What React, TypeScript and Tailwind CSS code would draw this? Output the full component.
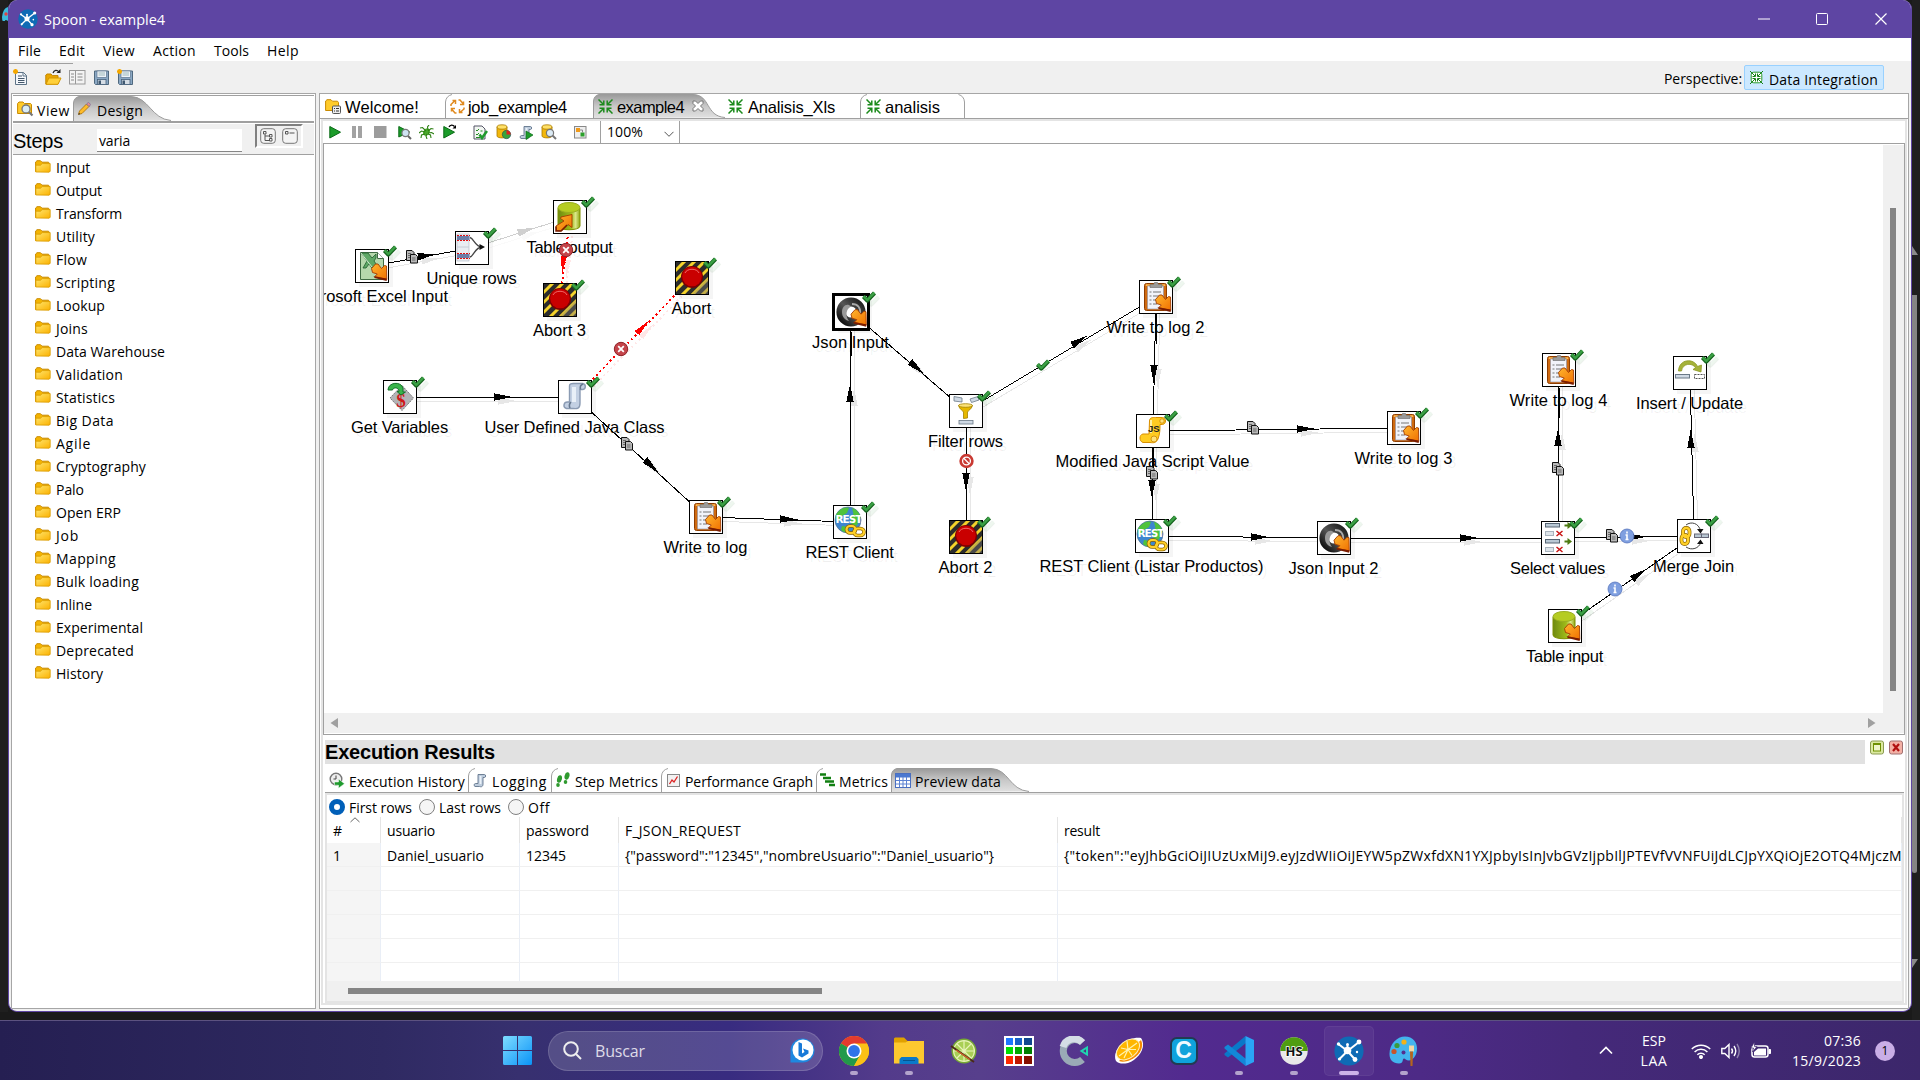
import React, { useLayoutEffect, useRef, useState } from "react";

/* Text that is tracked so that it fills exactly w pixels. */
function Fit({ w, children, className = "" }: { w: number; children: string; className?: string }) {
  const ref = useRef<HTMLSpanElement>(null);
  const [sp, setSp] = useState(0);
  useLayoutEffect(() => {
    if (ref.current) {
      const natural = ref.current.getBoundingClientRect().width;
      setSp((w - natural) / children.length);
    }
  }, []);
  return (
    <span className={"inline-block shrink-0 whitespace-pre " + className} style={{ width: w }}>
      <span ref={ref} style={{ letterSpacing: sp }}>{children}</span>
    </span>
  );
}

/* ---------- small icons ---------- */
type P = { className?: string };
const Folder = ({ className = "" }: P) => (
  <svg className={"shrink-0 " + className} width="16" height="13" viewBox="0 0 16 13">
    <defs>
      <linearGradient id="fold" x1="0" y1="0" x2="1" y2="1"><stop offset="0" stopColor="#ffe66e" /><stop offset="1" stopColor="#fbb100" /></linearGradient>
    </defs>
    <path d="M.6 11.5V2L2 .7h3.5L7 2.2h6.5l1 1.3v8z" fill="#f4b400" stroke="#c98a00" />
    <path d="M.8 12V5.2h4.7L7.2 3.6h8v7.6l-1 1z" fill="url(#fold)" stroke="#d89a00" strokeWidth=".8" />
  </svg>
);
const SpoonLogo = ({ s = 20 }: { s?: number }) => (
  <svg width={s} height={s} viewBox="0 0 30 30" className="shrink-0">
    <circle cx="15" cy="15" r="14.6" fill="#0f6bb5" />
    <g stroke="#fff" strokeWidth="2" strokeLinecap="round"><path d="M13.5 15L25 6M13.5 15L5 8.500M13.5 15L5.500 23M13.5 15L21 23.500M13.5 15l0-5" /></g>
    <circle cx="13.5" cy="14.5" r="3.800" fill="#fff" /><circle cx="25" cy="6" r="2.4" fill="#fff" /><circle cx="4.500" cy="8" r="1.7" fill="#fff" /><circle cx="5.500" cy="23" r="1.6" fill="#fff" /><circle cx="21" cy="23.500" r="2.4" fill="#fff" /><circle cx="13.5" cy="8.5" r="1.5" fill="#fff" /><circle cx="23" cy="16" r="1.2" fill="#fff" />
  </svg>
);
const Star = () => <path d="M2.5 0v5M0 2.5h5M.7.7l3.6 3.6M4.3.7L.7 4.3" stroke="#f5a800" strokeWidth="1.5" />;
const NewFile = () => (
  <svg width="16" height="17" viewBox="0 0 16 17" className="shrink-0">
    <path d="M2.5 3.5h8l3 3v9h-11z" fill="#f4f7fb" stroke="#5d7386" /><path d="M10 3.5v3.5h3.5" fill="none" stroke="#5d7386" />
    <path d="M5 7h4M5 9.5h6.5M5 11.5h6.5M5 13.5h6.5" stroke="#44576a" /><Star />
  </svg>
);
const OpenFile = () => (
  <svg width="17" height="17" viewBox="0 0 17 17" className="shrink-0">
    <path d="M.8 15V6l1.2-1h4l1.4 1.6H13V15z" fill="#e9a600" stroke="#c48600" /><path d="M1 15.3L3.8 9H16l-3 6.3z" fill="#ffd03a" stroke="#d49600" /><path d="M8 4c1-3 4-3.5 6-1" fill="none" stroke="#222" strokeWidth="1.200" /><path d="M11.500 4h4V0z" fill="#222" />
  </svg>
);
const Explorer = () => (
  <svg width="17" height="15" viewBox="0 0 17 15" className="shrink-0"><rect x=".5" y=".5" width="15.5" height="13.5" fill="#f3f3f3" stroke="#999" /><path d="M6.5 1v13" stroke="#999" /><path d="M2 4h3M2 7h3M2 10h3M8.500 4h5M8.500 7h5M8.500 10h5" stroke="#888" /></svg>
);
const Save = ({ star = false }: { star?: boolean }) => (
  <svg width="17" height="17" viewBox="0 0 17 17" className="shrink-0">
    <path d="M1.500 2h14v13.500h-13l-1-1z" fill="#8ba8c4" stroke="#50697f" /><rect x="4" y="2" width="9.500" height="6.500" fill="#eef3f8" stroke="#5b7690" strokeWidth=".7" /><path d="M5.500 4h6.500M5.500 6h6.500" stroke="#8aa" strokeWidth=".8" /><rect x="4.500" y="10.500" width="8.500" height="5" fill="#d5dde5" stroke="#45607a" strokeWidth=".8" /><rect x="5.500" y="11.500" width="2.500" height="3.500" fill="#3f5870" />
    {star && <Star />}
  </svg>
);
const ViewIcon = () => (
  <svg width="17" height="16" viewBox="0 0 17 16" className="shrink-0"><path d="M.6 12.500V2.500L2 1h4l1.500 1.500h6l1 1v9z" fill="#ffcb2b" stroke="#c98a00" /><circle cx="9" cy="8" r="4" fill="#d9ecf5" stroke="#777" strokeWidth="1.300" /><path d="M12 11l3.500 3.500" stroke="#777" strokeWidth="2.200" /></svg>
);
const Pencil = () => (
  <svg width="13" height="13" viewBox="0 0 13 13" className="shrink-0"><path d="M.5 12.500l1-3.500 7-7 2.500 2.500-7 7z" fill="#fdbb2a" stroke="#a86c00" strokeWidth=".8" /><path d="M8.500 2l2-1.700 2.200 2.200L11 4.500z" fill="#e98a8a" stroke="#7a6ea0" strokeWidth=".8" /><path d="M.3 12.700l.6-2 1.400 1.400z" fill="#333" /></svg>
);
const TreeBtn = ({ tree }: { tree?: boolean }) => (
  <svg width="16" height="16" viewBox="0 0 16 16" className="shrink-0"><rect x=".7" y=".7" width="14.600" height="14.600" rx="3" fill="#f4f4f4" stroke="#777" />
    {tree ? <path d="M3.500 3.500h2.500v2.500h-2.500zM5 6.500v6h4M5 8h4M9.500 6.500h2.500v2.500h-2.500zM9.500 10.500h2.500v2.500h-2.500z" fill="none" stroke="#555" /> : <path d="M3.500 3.500h2.500v2.500h-2.500zM7.500 5h5" fill="none" stroke="#555" />}
  </svg>
);
const WelcomeIcon = () => (
  <svg width="16" height="15" viewBox="0 0 16 15" className="shrink-0"><path d="M.6 11.500V2L2 .7h4l1.500 1.500h5l1 1.300v8z" fill="#ffcb2b" stroke="#c98a00" /><rect x="7.500" y="7" width="8" height="7.500" rx="1" fill="#eee" stroke="#555" /><path d="M9 9.500h1M11 9.500h3M9 12h1M11 12h3" stroke="#333" /></svg>
);
/* Four corner arrows: pointing out for jobs, in for transformations. */
const JobIcon = () => (
  <svg width="15" height="15" viewBox="0 0 15 15" className="shrink-0"><g fill="none" stroke="#e08a1e" strokeWidth="1.500"><path d="M1 7V5.500L4.500 2M2.500 1.500h3V5" /><path d="M8.500 1H10L13 4.500M13.500 2.500v3H10" /><path d="M14 8.500V10L10.500 13M12.500 13.500h-3V10" /><path d="M6.500 14H5L2 10.500M1.500 12.500v-3H5" /></g></svg>
);
const TransIcon = () => (
  <svg width="15" height="15" viewBox="0 0 15 15" className="shrink-0"><g fill="none" stroke="#1b8a1b" strokeWidth="1.500"><path d="M.5.500l5 5M5.800 1.500v4.300H1.500" /><path d="M14.500.500l-5 5M9.200 1.500v4.300h4.300" /><path d="M.5 14.500l5-5M5.800 13.500V9.200H1.500" /><path d="M14.500 14.500l-5-5M9.200 13.500V9.200h4.300" /></g></svg>
);
const PerspIcon = () => (
  <svg width="13" height="13" viewBox="0 0 13 13" className="shrink-0"><rect x="1.200" y="1.200" width="10.600" height="10.600" rx="2.500" fill="#fff" stroke="#2a9a2a" /><path d="M0 0l5 5M13 0L8 5M0 13l5-5M13 13L8 8M5.500 2.500v3H2.500M7.500 2.500v3h3M5.500 10.500v-3H2.500M7.500 10.500v-3h3" stroke="#178017" fill="none" /></svg>
);
const Run = ({ arrow = false }: { arrow?: boolean }) => (
  <svg width="14" height="15" viewBox="0 0 14 15" className="shrink-0"><path d="M.8 2.500L11.500 8.200.8 14z" fill="#1c9c2a" stroke="#0b6b17" />{arrow && <><path d="M6 3c1-2.500 4-2.500 5.500-.5" fill="none" stroke="#000" strokeWidth="1.300" /><path d="M9.500 4.500H13V1z" fill="#000" /></>}</svg>
);
const Pause = () => <svg width="11" height="12" className="shrink-0"><path d="M0 0h4v12H0zM6 0h4v12H6z" fill="#a2a2a2" /></svg>;
const Stop = () => <svg width="13" height="12" className="shrink-0"><rect width="12.500" height="12" fill="#9c9c9c" /></svg>;
const PreviewRun = () => (
  <svg width="14" height="15" viewBox="0 0 14 15" className="shrink-0"><path d="M.8 1.500L11.500 7 .8 12z" fill="#1c9c2a" stroke="#0b6b17" /><circle cx="7.500" cy="8" r="3.600" fill="#cfe3f2" stroke="#777" strokeWidth="1.200" /><path d="M10 11l3 3" stroke="#666" strokeWidth="2" /></svg>
);
const Bug = () => (
  <svg width="15" height="14" viewBox="0 0 15 14" className="shrink-0"><ellipse cx="7.500" cy="7" rx="3" ry="4" fill="#4aa82c" transform="rotate(35 7.500 7)" /><path d="M7 6L3.500 2.500 1 3M6 7L2.500 6 0 8M6 9l-3.500 1L2 13M8 9l-1 2 1 3M9 5L8.500 2 10 0M9 6l3-2.500L14.500 4M9 8l3.500-.5L15 9M9 9l2.500 1 .5 3" stroke="#2c7f12" fill="none" strokeWidth="1.100" /></svg>
);
const Verify = () => (
  <svg width="15" height="15" viewBox="0 0 15 15" className="shrink-0"><path d="M1 1h8l3 3v10H1z" fill="#f2f6f2" stroke="#556" /><path d="M3 5l1 1 2-2M3 9l1 1 2-2M7.500 6h2M3 12.500h4" stroke="#238a23" fill="none" /><path d="M6.500 9.500l2.500 3.500L14 6" fill="none" stroke="#1f9a2d" strokeWidth="2.600" /></svg>
);
const Cyl = ({ k }: { k: "pie" | "mag" }) => (
  <svg width="16" height="16" viewBox="0 0 16 16" className="shrink-0"><path d="M1 3v9c0 2.500 10 2.500 10 0V3" fill="#f2b70c" stroke="#a87800" strokeWidth=".8" /><ellipse cx="6" cy="3" rx="5" ry="2.200" fill="#ffe066" stroke="#a87800" strokeWidth=".8" />
    {k === "pie" ? <><circle cx="10.500" cy="10.500" r="4.200" fill="#37a43b" stroke="#245" strokeWidth=".6" /><path d="M10.500 10.500V6.300a4.200 4.200 0 0 1 4.200 4.200z" fill="#d22" /></> : <><circle cx="9" cy="9" r="3.600" fill="#dcebf5" stroke="#777" strokeWidth="1.200" /><path d="M11.500 11.500l3.500 3.500" stroke="#777" strokeWidth="2" /></>}
  </svg>
);
const Scroll = ({ run = false }: { run?: boolean }) => (
  <svg width="15" height="15" viewBox="0 0 15 15" className="shrink-0"><path d="M5 1.500h6.500c1.500 0 1.500 3 0 3H10v6.500c0 3-2 3-3.500 2.500H2c-1.500-.5-1-3 .5-3H5z" fill="#bccbdc" stroke="#62758c" strokeWidth=".9" /><path d="M7.500 3v8" stroke="#eaf1f8" strokeWidth="1.800" />{run && <path d="M7 6l7 4-7 4.500z" fill="#1c9c2a" stroke="#0b6b17" strokeWidth=".7" />}</svg>
);
const Results = () => <svg width="13" height="13" viewBox="0 0 13 13" className="shrink-0"><rect x=".5" y=".5" width="11.500" height="11.500" fill="#eee" stroke="#888" /><rect x="2" y="2" width="4" height="4" fill="#f09a1a" /><rect x="6.500" y="6.500" width="4" height="4" fill="#2aa02a" /><path d="M6 4h2.500v2.500" stroke="#888" fill="none" /></svg>;

/* ---------- step icons on a 32 x 32 grid ---------- */
const OrangeArrow = ({ t = "" }: { t?: string }) => (
  <g transform={t}>
    <path d="M15.500 18.500l4-4.500h2.500l3.500 4.500 3-3 2 .5.300 13.500-12-3 2.500-2.500-4.800-1.500z" fill="url(#oa)" stroke="#a33a00" strokeWidth=".9" />
    <path d="M17.500 26.300l1.200 1.700 12 3v-2.500z" fill="#7a1c00" />
  </g>
);
const Clip = () => (
  <>
    <rect x="4.500" y="2.500" width="22" height="27" rx="2" fill="#cf6a10" stroke="#8f3d00" /><path d="M6.500 5V4h18v1" stroke="#ffb84d" strokeWidth="1.500" fill="none" /><path d="M7.500 5h16v21l-3 2h-13z" fill="#f1f3fa" stroke="#8a8fa5" strokeWidth=".6" />
    <path d="M10 6.500V3.500h3.500l1-2h3l1 2H22v3z" fill="#9a9a9a" stroke="#666" strokeWidth=".6" />
    <path d="M9.500 11h2M13 11h8M9.500 15h2M13 15h8M9.500 19h2M13 19h5M9.500 23h2M13 23h4" stroke="#777" strokeWidth="1.200" /><OrangeArrow />
  </>
);
const Chain = () => (
  <g fill="none"><g stroke="#8a6200" strokeWidth="3.600"><rect x="12.500" y="20" width="9" height="7" rx="3.500" /><rect x="20" y="22.500" width="10" height="7" rx="3.500" /></g><g stroke="#ffd028" strokeWidth="2.200"><rect x="12.500" y="20" width="9" height="7" rx="3.500" /><rect x="20" y="22.500" width="10" height="7" rx="3.500" /></g></g>
);
const Glyph = ({ k }: { k: string }) => {
  switch (k) {
    case "excel": return <><path d="M4.500 2.500h17l6 6v21h-23z" fill="#b5d8ac" stroke="#3f6b43" /><path d="M21.500 2.500v6h6" fill="#fff" stroke="#3f6b43" /><path d="M5 3h7l4 5 4-4v4l-2 3 5 7h-7l-3-4-3 4H7l4-7z" fill="#5ea866" stroke="#1f5c2c" strokeWidth=".8" /><path d="M5 3l11 14" stroke="#cfe8cf" /><OrangeArrow /></>;
    case "unique": return <><rect x="1" y="2" width="12" height="27" fill="#e9edf2" stroke="#b5bcc8" strokeWidth=".7" /><path d="M1 15h12" stroke="#c8ccd6" /><rect x="1" y="4" width="12.500" height="4" fill="#6b7da8" /><rect x="1" y="22" width="12.500" height="4" fill="#6b7da8" /><path d="M1 3.500h13M1 8.500h13M1 21.500h13M1 26.500h13" stroke="#e01010" strokeDasharray="2 1" /><path d="M14 5.500c4 1 5 9.500 12 9.500M14 25c4-1 5-10 12-10" fill="none" stroke="#444" strokeWidth="1.300" /><path d="M23.500 12l5.500 3-5.500 3z" fill="#111" /></>;
    case "tout": case "tin": return <><path d="M4 7v18c0 5 22 5 22 0V7" fill="url(#cy)" stroke="#7e9000" /><ellipse cx="15" cy="6.500" rx="11" ry="5" fill="#b5cc22" stroke="#9aae20" />{k === "tin" ? <OrangeArrow /> : <><path d="M18 13.500L7 16l-.5 1.500 3.500 2.500-8 5 .500 4.500 5 .5 6.500-6.500 4 3z" fill="url(#oa)" stroke="#a33a00" strokeWidth=".9" /><path d="M2 25.500v4.500h5l6-6" fill="none" stroke="#7a1c00" strokeWidth="1.500" /></>}</>;
    case "abort": return <><rect width="32" height="32" fill="#2c2c2c" /><path d="M-2 10L10-2M-2 20L20-2M-2 30L30-2M5 34L34 5M15 34L34 15M25 34l9-9" stroke="#f5d32a" strokeWidth="3" /><path d="M14 34L34 14v20z" fill="#777" opacity=".4" /><circle cx="16" cy="15" r="11" fill="#7c0000" /><circle cx="16" cy="14.500" r="9.800" fill="#c90000" /><path d="M9 11c2-5 12-5 14 0" stroke="#f06a6a" fill="none" /></>;
    case "getvar": return <><path d="M18 4.500L29.500 17 18 29.500 6 17z" fill="#b3b3b6" stroke="#777" strokeDasharray="2 1" /><text x="17" y="25.500" textAnchor="middle" fontSize="19" fontWeight="700" fill="#d01818" fontFamily="Liberation Serif">$</text><path d="M4 9c0-8 13-9 15-2v4h2.500l-4.500 3-4-3.500 2-.2C15 6 9 6 8.500 9z" fill="#38b44a" stroke="#14702a" /></>;
    case "java": return <><path d="M10.500 5c0-2.500 2-2.500 4-2.500h9c4 .5 3.500 6 0 6h-2.500V22c0 6-3 6-7 5.500H7.500c-4-1-3-6.500 1-6.500h2z" fill="#c3d0e3" stroke="#8b9bb3" strokeWidth="1.400" /><path d="M15 6v15" stroke="#e9f0f8" strokeWidth="4" /><path d="M24 3c-3 1-3 3.500-2.500 5.500M12 21c-2 2-2 4-1 6" stroke="#66788f" strokeWidth="1.600" fill="none" /></>;
    case "json": return <><circle cx="16" cy="16" r="9.800" fill="none" stroke="url(#js)" strokeWidth="9.600" /><circle cx="16" cy="16" r="5.500" fill="#fff" /><path d="M16 10.500c-3.500-4-9-1-9 5.500 0 5 3 8 7 9-4-5-3-12 2-14.500z" fill="#999" /><path d="M17 8c6 0 9 4 8 10" stroke="#aaa" strokeWidth="1.800" fill="none" /><OrangeArrow t="translate(.5 -.3)" /></>;
    case "filter": return <><g fill="#cfd9e4" stroke="#6a7886" strokeWidth=".8"><path d="M4 1.500l8 1.500v4l-8-1z" /><path d="M20 4l8-2.500 1 3.500-7.500 2.500z" /><rect x="9" y="25.500" width="14" height="3.500" /></g><path d="M8.500 10.500c1 4 4.500 5 5 6.500v6.500l4-.5v-6c.5-1.500 4-2.500 5-6.500z" fill="#e6b800" stroke="#a38200" strokeWidth=".8" /><ellipse cx="15.500" cy="10.500" rx="7" ry="1.800" fill="#fbe27a" stroke="#a38200" strokeWidth=".8" /></>;
    case "rest": return <><circle cx="14" cy="14" r="13" fill="#3e86cf" stroke="#4a6a8a" strokeWidth=".7" /><path d="M5 5c4-4 9-4 10-3l-2 5-5 3-2 5-4-1c-1-4 0-6 3-9zM18 2c5 1 8 6 8.500 10l-4 8-5-2-1-6 3-4zM8 20l6 1 1 5c-3 1-6 0-8-2z" fill="#4fc33c" /><text x="1.500" y="16.500" fontSize="10.500" fontWeight="700" textLength="27" fill="#fff" fontFamily="DejaVu Sans">REST</text><Chain /></>;
    case "clip": return <Clip />;
    case "js": return <><path d="M12.500 6c0-4 4-3.500 6-3.500h7c4 .5 4 6.500 0 7h-2.500c0 5 0 9-2 14.500-2 4-4 4-8 3.500H6c-4-1-4-8 0-8.500h6z" fill="#ffcc22" stroke="#d98f00" /><path d="M14 5v13" stroke="#fff0a0" strokeWidth="2" /><circle cx="25" cy="6" r="2.200" fill="#ffe27a" stroke="#c98400" strokeWidth=".8" /><circle cx="17" cy="24" r="3" fill="#ffe27a" stroke="#c98400" strokeWidth=".8" /><text x="11" y="17" fontSize="9.500" fontWeight="700" fill="#222" fontFamily="Liberation Sans">JS</text></>;
    case "insert": return <><path d="M4.500 14C5 1.500 20 1 23.500 9.500l4-1.500-.5 7-8-2.500 2.500-1.700C18.500 5.500 8.500 6 7.500 14z" fill="#a5b23a" stroke="#8c971f" strokeWidth=".8" /><rect x="1.500" y="17.500" width="14" height="3.500" fill="#cfd9e4" stroke="#6a7886" /><rect x="20.500" y="17.500" width="10" height="4" fill="none" stroke="#555" strokeDasharray="2 1" /></>;
    case "select": return <>{[1.5, 17.5].map((y) => <g key={y}><rect x="3.500" y={y} width="14" height="3.500" fill="#b9c8d4" stroke="#566573" /><rect x="3.500" y={y + 8} width="8" height="4" fill="#dfe5ea" stroke="#a9b4be" /><path d={`M14.500 ${y + 7.500}l6 5M20.500 ${y + 7.500}l-6 5`} stroke="#c81414" strokeWidth="1.500" /><path d={`M22.500 ${y + 2}h4`} stroke="#4d7a12" strokeWidth="2" /><path d={`M25.500 ${y - 1.500}l4.500 3.500-4.500 3.500z`} fill="#4d7a12" /></g>)}</>;
    case "merge": return <><path d="M8 5c5-4 13-2 14.500 6M8 27c6 4 13 1 14.500-4" fill="none" stroke="#444" /><path d="M19 9h6.500L22.500 13.500zM19 24h6.500l-3-4.500z" fill="#111" /><g fill="none"><g stroke="#8a6200" strokeWidth="3.800"><rect x="5" y="8" width="6.500" height="9" rx="3.200" /><rect x="3.500" y="15" width="6.500" height="9" rx="3.200" /></g><g stroke="#ffd028" strokeWidth="2.400"><rect x="5" y="8" width="6.500" height="9" rx="3.200" /><rect x="3.500" y="15" width="6.500" height="9" rx="3.200" /></g></g><rect x="16.500" y="14" width="7" height="3.500" fill="#b9c8d4" stroke="#667" /><rect x="23.500" y="14" width="7" height="3.500" fill="#b9c8d4" stroke="#667" /></>;
  }
  return null;
};
const Tick = () => <g strokeLinejoin="round"><path d="M1.500 6.500l3.800 4L12.500 3" fill="none" stroke="#17651f" strokeWidth="4.200" /><path d="M1.500 6.200l3.800 3.800L12.500 2.600" fill="none" stroke="#3aa044" strokeWidth="2.400" /></g>;

/* name, box left, box top, label width, icon */
const steps: [string, number, number, number, string][] = [
  ["Microsoft Excel Input", 355, 249, 153, "excel"], ["Unique rows", 455, 231, 90, "unique"], ["Table output", 553, 200, 86, "tout"],
  ["Abort 3", 543, 283, 53, "abort"], ["Abort", 675, 261, 40, "abort"], ["Get Variables", 383, 380, 97, "getvar"],
  ["User Defined Java Class", 558, 380, 180, "java"], ["Json Input", 834, 295, 77, "json"], ["Filter rows", 949, 394, 75, "filter"],
  ["Abort 2", 949, 520, 54, "abort"], ["Write to log", 689, 500, 84, "clip"], ["REST Client", 833, 505, 88, "rest"],
  ["Write to log 2", 1139, 280, 98, "clip"], ["Modified Java Script Value", 1136, 414, 194, "js"], ["REST Client (Listar Productos)", 1135, 519, 224, "rest"],
  ["Json Input 2", 1317, 521, 90, "json"], ["Write to log 3", 1387, 411, 98, "clip"], ["Write to log 4", 1542, 353, 98, "clip"],
  ["Insert / Update", 1673, 356, 107, "insert"], ["Select values", 1541, 521, 95, "select"], ["Merge Join", 1677, 519, 81, "merge"], ["Table input", 1548, 609, 77, "tin"],
];
/* x1, y1, x2, y2, arrow base x, arrow base y, colour, dotted */
type Hop = [number, number, number, number, number, number, string, boolean];
const hops: Hop[] = [
  [372, 266, 472, 248, 418, 257, "#000", false], [472, 248, 570, 217, 518, 233, "#cfcfcf", false], [570, 217, 560, 300, 564, 256, "#f00", true],
  [575, 397, 692, 278, 637, 333, "#f00", true], [400, 397, 575, 397, 494, 397, "#000", false], [575, 397, 706, 517, 645, 460, "#000", false],
  [706, 517, 850, 522, 780, 519, "#000", false], [850, 522, 851, 312, 850, 402, "#000", false], [851, 312, 966, 411, 910, 362, "#000", false],
  [966, 411, 966, 537, 966, 473, "#000", false], [966, 411, 1156, 297, 1072, 345, "#000", false], [1156, 297, 1153, 431, 1154, 365, "#000", false],
  [1153, 431, 1404, 428, 1297, 429, "#000", false], [1153, 431, 1152, 536, 1152, 480, "#000", false], [1152, 536, 1334, 538, 1251, 537, "#000", false],
  [1334, 538, 1558, 538, 1460, 538, "#000", false], [1558, 538, 1559, 370, 1558, 446, "#000", false], [1558, 538, 1694, 536, 1628, 537, "#000", false],
  [1694, 536, 1690, 373, 1691, 448, "#000", false], [1565, 626, 1694, 536, 1632, 579, "#000", false],
];
function HopLines({ ghost }: { ghost?: boolean }) {
  return (
    <g transform={ghost ? "translate(4 4)" : undefined} opacity={ghost ? 0.09 : 1} shapeRendering="crispEdges">
      {hops.map(([x1, y1, x2, y2, ax, ay, c, dot], i) => {
        const d = Math.hypot(x2 - x1, y2 - y1), ux = (x2 - x1) / d, uy = (y2 - y1) / d;
        const hw = dot ? 3 : 3.7;
        const pts = [[ax - uy * hw, ay + ux * hw], [ax + uy * hw, ay - ux * hw], [ax + ux * 18, ay + uy * 18]].map((p) => p.join(",")).join(" ");
        return <g key={i}><line x1={x1} y1={y1} x2={x2} y2={y2} stroke={c} strokeWidth={dot ? 2 : 1} strokeDasharray={dot ? "2 3" : undefined} /><polygon points={pts} fill={c} /></g>;
      })}
    </g>
  );
}
const Copy = ({ x, y }: { x: number; y: number }) => <g transform={`translate(${x - 6} ${y - 7})`} fill="#b9b9b9" stroke="#111"><path d="M.5.500h5.500l2 2v8H.5z" /><path d="M4.500 4.500h5l2 2v6.500h-7z" /><path d="M2 3.500h3M2 5.500h2M2 7.500h2M6 8h3.500M6 10h3.500" stroke="#555" strokeWidth=".8" /></g>;
const Info = ({ x, y }: { x: number; y: number }) => <g><circle cx={x} cy={y} r="7" fill="#7f9fe0" stroke="#5674bd" strokeWidth=".8" /><path d={`M${x} ${y - 4.500}v2M${x - 1.500} ${y - 1}h1.500v4.500m-1.500 0h3`} stroke="#fff" strokeWidth="1.600" fill="none" /></g>;
const ErrorDot = ({ x, y }: { x: number; y: number }) => <g><circle cx={x} cy={y} r="6.700" fill="#c4444a" stroke="#8f2328" /><path d={`M${x - 2.800} ${y - 2.800}l5.600 5.600M${x + 2.800} ${y - 2.800}l-5.600 5.600`} stroke="#fff" strokeWidth="1.800" /></g>;

function Canvas() {
  return (
    <div className="relative h-[569px] w-[1559px] shrink-0 overflow-hidden bg-white">
      <div className="absolute left-[-324px] top-[-144px] h-[800px] w-[1920px] font-['Liberation_Sans',sans-serif] text-[16.5px] leading-[20px] text-black">
        <svg className="absolute left-0 top-0" width="1920" height="800">
          <defs>
            <linearGradient id="oa" x1="0" y1="0" x2="1" y2="1"><stop offset="0" stopColor="#ffb52e" /><stop offset="1" stopColor="#f07000" /></linearGradient>
            <linearGradient id="cy"><stop offset="0" stopColor="#6f8a10" /><stop offset=".6" stopColor="#9fbb1a" /><stop offset=".8" stopColor="#dbe98a" /><stop offset="1" stopColor="#8ea512" /></linearGradient>
            <linearGradient id="js" x1="0" y1="1" x2="1" y2="0"><stop offset="0" stopColor="#111" /><stop offset=".5" stopColor="#555" /><stop offset="1" stopColor="#222" /></linearGradient>
          </defs>
          <HopLines ghost /><HopLines />
        </svg>
        {steps.map(([n, x, y, w, k]) => {
          const sel = n === "Json Input";
          return (
            <div key={n} className="absolute size-[34px]" style={{ left: x, top: y }}>
              <div className={"size-[34px] border border-black bg-white shadow-[4px_4px_0_rgba(0,0,0,0.04)] " + (sel ? "outline-2 outline-black" : "")}>
                <svg width="32" height="32" viewBox="0 0 32 32" className="block"><Glyph k={k} /></svg>
              </div>
              <svg className="absolute -top-[5px] left-[28px] overflow-visible" width="16" height="14"><g transform="translate(4 4)" opacity=".08"><Tick /></g><Tick /></svg>
              <div className="absolute left-[16.5px] top-[37px] -translate-x-1/2 text-center [text-shadow:4px_4px_0_rgba(0,0,0,0.06)]"><Fit w={w}>{n}</Fit></div>
            </div>
          );
        })}
        <svg className="absolute left-0 top-0" width="1920" height="800">
          <Copy x={412} y={257} /><Copy x={627} y={444} /><Copy x={1253} y={428} /><Copy x={1152} y={473} /><Copy x={1558} y={469} /><Copy x={1612} y={536} />
          <Info x={1627} y={536} /><Info x={1615} y={589} /><ErrorDot x={566} y={250} /><ErrorDot x={621} y={349} />
          <circle cx="966.500" cy="461" r="7.200" fill="#c93a33" /><circle cx="966.500" cy="461" r="3.900" fill="none" stroke="#fff" strokeWidth="1.300" /><path d="M963.800 458.300l5.400 5.400" stroke="#fff" strokeWidth="1.300" />
          <g transform="translate(1036 358)"><Tick /></g>
          <g stroke="#000" shapeRendering="crispEdges"><path d="M1156.500 314v30M851.500 332v24M966.500 428v26M1153.500 448v20M1559.500 388v30M1690.500 391v24" /></g>
        </svg>
      </div>
    </div>
  );
}

/* Curved selected tab of the classic tab folder */
const TabShape = ({ w, h, flat }: { w: number; h: number; flat: number }) => (
  <svg className="absolute left-0 top-0 z-0" width={w} height={h + 1}>
    <defs><linearGradient id={"tab" + w} x1="0" y1="0" x2="0" y2="1"><stop offset="0" stopColor="#9a9a9a" /><stop offset=".5" stopColor="#c8c8c8" /><stop offset="1" stopColor="#e1e1e1" /></linearGradient></defs>
    <path d={`M.5 ${h + 1}V7Q1 1.500 6 .5H${flat}C${flat + 18} 1 ${w - 20} ${h - 1} ${w} ${h + 0.5}z`} fill={`url(#tab${w})`} />
    <path d={`M.5 ${h + 1}V7Q1 1.500 6 .5H${flat}C${flat + 18} 1 ${w - 20} ${h - 1} ${w} ${h + 0.5}`} fill="none" stroke="#9b9b9b" />
  </svg>
);
const TabEdge = () => <svg width="8" height="24" className="shrink-0"><path d="M.5 24V8Q1 2 7 .5" fill="none" stroke="#a0a0a0" /></svg>;
const TabEnd = () => <svg width="9" height="24" className="shrink-0"><path d="M.5.500Q6 2 6.500 8V24" fill="none" stroke="#a0a0a0" /></svg>;

const categories: [string, number][] = [["Input", 34], ["Output", 46], ["Transform", 66], ["Utility", 39], ["Flow", 31], ["Scripting", 59], ["Lookup", 49], ["Joins", 32], ["Data Warehouse", 109], ["Validation", 67], ["Statistics", 59], ["Big Data", 58], ["Agile", 35], ["Cryptography", 90], ["Palo", 28], ["Open ERP", 65], ["Job", 23], ["Mapping", 60], ["Bulk loading", 83], ["Inline", 36], ["Experimental", 87], ["Deprecated", 78], ["History", 47]];

function LeftPanel() {
  return (
    <div className="flex h-[916px] w-[305px] shrink-0 flex-col border border-[#a6a6a6] bg-white px-px pt-px">
      <div className="flex h-[28px] shrink-0 items-center border-b-2 border-t border-[#a0a0a0] pl-[4px]">
        <ViewIcon /><Fit w={33} className="ml-[3px] mt-[4px]">View</Fit>
        <div className="relative ml-[3px] h-[25px] w-[98px]">
          <TabShape w={98} h={24} flat={58} />
          <div className="relative flex h-[25px] items-center pl-[5px]"><Pencil /><Fit w={46} className="ml-[6px] mt-[4px]">Design</Fit></div>
        </div>
      </div>
      <div className="mt-px flex h-[31px] shrink-0 items-start border-b border-[#a0a0a0] bg-[#f0f0f0]">
        <Fit w={50} className="mt-[5px] font-['Liberation_Sans',sans-serif] text-[20px] leading-[24px]">Steps</Fit>
        <div className="ml-[34px] mt-[5px] flex h-[23px] w-[145px] items-center border-b border-[#868686] bg-white pl-[2px] pt-[2px]"><Fit w={31}>varia</Fit></div>
        <div className="ml-[13px] flex h-[24px] w-[48px] items-center gap-[6px] border-2 border-b-[#fff] border-l-[#808080] border-r-[#fff] border-t-[#808080] pl-[3px]"><TreeBtn tree /><TreeBtn /></div>
      </div>
      <div className="flex flex-col">
        {categories.map(([c, w]) => (
          <div key={c} className="flex h-[23px] items-center pl-[22px]"><Folder /><Fit w={w} className="ml-[5px] mt-[2px] leading-[20px]">{c}</Fit></div>
        ))}
      </div>
    </div>
  );
}

const EditorTabs = () => (
  <div className="flex h-[25px] shrink-0 items-center border-b border-[#a0a0a0] pl-[5px] font-['Liberation_Sans',sans-serif] text-[16.500px]">
    <WelcomeIcon /><Fit w={74} className="ml-[4px] mt-[2px]">Welcome!</Fit>
    <div className="ml-[26px] flex items-center"><TabEdge /></div>
    <div className="-ml-[3px] flex items-center"><JobIcon /><Fit w={99} className="ml-[3px] mt-[2px]">job_example4</Fit></div>
    <div className="relative ml-[26px] h-[24px] w-[132px]">
      <TabShape w={132} h={23} flat={100} />
      <div className="relative flex h-[24px] items-center pl-[5px]"><TransIcon /><Fit w={67} className="ml-[4px] mt-[2px]">example4</Fit>
        <svg width="12" height="12" viewBox="0 0 12 12" className="ml-[8px]"><path d="M1 1h2.500L6 3.500 8.500 1H11v2.500L8.500 6 11 8.500V11H8.500L6 8.500 3.500 11H1V8.500L3.500 6 1 3.500z" fill="#fff" stroke="#777" /></svg></div>
    </div>
    <div className="ml-[3px] flex items-center"><TransIcon /><Fit w={87} className="ml-[5px] mt-[2px]">Analisis_Xls</Fit></div>
    <div className="ml-[25px] flex items-center"><TabEdge /></div>
    <div className="-ml-[2px] flex items-center"><TransIcon /><Fit w={55} className="ml-[4px] mt-[2px]">analisis</Fit></div>
    <div className="ml-[18px] flex"><TabEnd /></div>
  </div>
);

const EditorToolbar = () => (
  <div className="flex h-[22px] shrink-0 items-center bg-white pl-[6px]">
    <div className="flex items-center"><div className="mb-[2px]"><Run /></div><div className="ml-[9px]"><Pause /></div><div className="ml-[11px]"><Stop /></div><div className="ml-[11px]"><PreviewRun /></div><div className="ml-[7px]"><Bug /></div><div className="mb-[2px] ml-[9px]"><Run arrow /></div>
      <div className="ml-[16px]"><Verify /></div><div className="ml-[8px]"><Cyl k="pie" /></div><div className="ml-[7px]"><Scroll run /></div><div className="ml-[7px]"><Cyl k="mag" /></div><div className="ml-[17px]"><Results /></div></div>
    <div className="ml-[13px] flex h-[22px] w-[80px] items-center border-x border-[#a0a0a0] pl-[6px]"><Fit w={36}>100%</Fit><svg width="10" height="7" className="ml-[21px] mt-1"><path d="M.5.800L5 5.300 9.500.8" fill="none" stroke="#555" /></svg></div>
  </div>
);

const ResultTabs = () => (
  <div className="flex h-[25px] shrink-0 items-center border-b border-[#a0a0a0] pl-[4px]">
    <svg width="16" height="17" viewBox="0 0 16 17" className="shrink-0"><circle cx="7" cy="7" r="5.800" fill="#eee" stroke="#777" strokeWidth="1.400" /><path d="M7 3.500V7H4.500" stroke="#444" fill="none" /><path d="M5.500 10h4V7l6 4.700-6 4.500v-3h-4z" fill="#1f9a2d" stroke="#fff" strokeWidth=".5" /></svg>
    <Fit w={116} className="ml-[4px] mt-[3px]">Execution History</Fit><div className="ml-[3px]"><TabEdge /></div>
    <div className="-ml-[3px]"><Scroll /></div><Fit w={55} className="ml-[4px] mt-[3px]">Logging</Fit><div className="ml-[4px]"><TabEdge /></div>
    <svg width="16" height="16" viewBox="0 0 16 16" className="-ml-[4px] shrink-0" fill="#2f9a2f"><ellipse cx="4.500" cy="7" rx="2.400" ry="3.800" transform="rotate(15 4.500 7)" /><ellipse cx="3" cy="13" rx="1.800" ry="2" /><ellipse cx="12" cy="4" rx="2.400" ry="3.800" transform="rotate(15 12 4)" /><ellipse cx="10.500" cy="10" rx="1.800" ry="2" /></svg>
    <Fit w={83} className="ml-[4px] mt-[3px]">Step Metrics</Fit><div className="ml-[3px]"><TabEdge /></div>
    <svg width="13" height="13" viewBox="0 0 13 13" className="-ml-[2px] shrink-0"><rect x=".5" y=".5" width="12" height="12" fill="#f2f2f2" stroke="#888" /><path d="M2.500 10l2.500-4 2 2 3.500-5.500" fill="none" stroke="#d22" strokeWidth="1.300" /></svg>
    <Fit w={128} className="ml-[5px] mt-[3px]">Performance Graph</Fit><div className="ml-[3px]"><TabEdge /></div>
    <svg width="16" height="14" viewBox="0 0 16 14" className="-ml-[4px] shrink-0"><path d="M0 1.500h6M3 5h8M5 8.500h9M9 12h6" stroke="#128012" strokeWidth="2.500" /></svg>
    <Fit w={49} className="ml-[3px] mt-[3px]">Metrics</Fit>
    <div className="relative ml-[3px] h-[24px] w-[138px]"><TabShape w={138} h={23} flat={100} />
      <div className="relative flex h-[24px] items-center pl-[4px]"><svg width="16" height="15" viewBox="0 0 16 15"><rect x=".5" y=".5" width="15" height="14" fill="#fff" stroke="#4a6fc0" /><rect x="1" y="1" width="14" height="3.500" fill="#4a78d0" /><path d="M1 7.500h14M1 11h14M4.500 4v10M8 4v10M11.500 4v10" stroke="#5c82d2" /></svg><Fit w={86} className="ml-[4px] mt-[3px]">Preview data</Fit></div></div>
  </div>
);
const Radio = ({ on }: { on?: boolean }) => on
  ? <div className="size-[16px] shrink-0 rounded-full border-[5px] border-[#005fb8] bg-white" />
  : <div className="size-[16px] shrink-0 rounded-full border border-[#808080] bg-[#f5f5f5]" />;

const cols = "grid grid-cols-[54px_139px_99px_439px_844px]";
const token = '{"token":"eyJhbGciOiJIUzUxMiJ9.eyJzdWIiOiJEYW5pZWxfdXN1YXJpbyIsInJvbGVzIjpbIlJPTEVfVVNFUiJdLCJpYXQiOjE2OTQ4MjczM';
function ExecutionResults() {
  return (
    <div className="ml-[2px] flex w-[1579px] flex-col">
      <div className="mt-[5px] flex h-[24px] items-start">
        <div className="flex h-[24px] w-[1540px] shrink-0 items-center bg-[#e1e1e1] font-['Liberation_Sans',sans-serif] text-[20px] font-bold"><Fit w={170}>Execution Results</Fit></div>
        <svg width="35" height="16" className="ml-[4px] shrink-0"><rect x="1.500" y="1" width="13" height="13" rx="2" fill="#dbe9a0" stroke="#8a9a50" /><rect x="4.500" y="4.500" width="7" height="6.500" fill="#eef5c8" stroke="#6f9000" /><path d="M4 4h8" stroke="#6f9000" strokeWidth="2" /><rect x="20.500" y="1" width="13" height="13" rx="2" fill="#f3b0a5" stroke="#a07070" /><path d="M24 4l6 7M30 4l-6 7" stroke="#b01010" strokeWidth="2.200" /></svg>
      </div>
      <div className="mt-[4px]"><ResultTabs /></div>
      <div className="h-[210px] border-2 border-[#e4e4e4] bg-white">
        <div className="flex h-[22px] items-center pl-[2px] pt-[2px]"><Radio on /><Fit w={63} className="ml-[4px] mt-[2px]">First rows</Fit><div className="ml-[7px]"><Radio /></div><Fit w={62} className="ml-[4px] mt-[2px]">Last rows</Fit><div className="ml-[7px]"><Radio /></div><Fit w={22} className="ml-[4px] mt-[2px]">Off</Fit></div>
        <div className={cols + " h-[26px] [&>div]:flex [&>div]:items-center [&>div]:border-r [&>div]:border-[#e5e5e5] [&>div]:pl-[6px] [&>div]:pt-[2px]"}>
          <div className="relative"><Fit w={8}>#</Fit><svg width="10" height="6" className="absolute left-[23px] top-0"><path d="M.5 5L5 .8 9.500 5" fill="none" stroke="#666" /></svg></div>
          <div><Fit w={48}>usuario</Fit></div>
          <div><Fit w={63}>password</Fit></div>
          <div><Fit w={116}>F_JSON_REQUEST</Fit></div>
          <div><Fit w={36}>result</Fit></div>
        </div>
        <div className="h-[138px] overflow-hidden">
          {[0, 1, 2, 3, 4, 5].map((r) => (
            <div key={r} className={cols + " h-[24px] [&>div]:flex [&>div]:items-center [&>div]:overflow-hidden [&>div]:border-b [&>div]:border-r [&>div]:border-b-[#f0f0f0] [&>div]:border-r-[#e9eef6] [&>div]:pl-[6px] [&>div]:pt-[2px]"}>
              <div className="bg-[#f5f5f5]">{r === 0 && <Fit w={8}>1</Fit>}</div>
              <div>{r === 0 && <Fit w={97}>Daniel_usuario</Fit>}</div>
              <div>{r === 0 && <Fit w={40}>12345</Fit>}</div>
              <div>{r === 0 && <Fit w={369}>{'{"password":"12345","nombreUsuario":"Daniel_usuario"}'}</Fit>}</div>
              <div>{r === 0 && <Fit w={838}>{token}</Fit>}</div>
            </div>
          ))}
        </div>
        <div className="flex h-[20px] items-center bg-[#f0f0f0] pl-[21px]"><div className="h-[6px] w-[474px] bg-[#858585]" /></div>
      </div>
    </div>
  );
}

function RightPanel() {
  return (
    <div className="flex h-[916px] w-[1590px] shrink-0 flex-col border border-[#a6a6a6] bg-white">
      <EditorTabs />
      <div className="mx-px flex h-[886px] flex-col border-2 border-[#e4e4e4]">
        <EditorToolbar />
        <div className="flex h-[592px] w-[1582px] shrink-0 flex-col border border-[#a0a0a0]">
          <div className="flex">
            <Canvas />
            <div className="mt-px w-[21px] bg-[#f0f0f0]"><div className="ml-[7px] mt-[63px] h-[483px] w-[6px] bg-[#858585]" /></div>
          </div>
          <div className="flex h-[20px] items-center justify-between bg-[#f0f0f0] pl-[6px] pr-[28px]">
            <svg width="8" height="10"><path d="M8 0v10L.5 5z" fill="#a0a0a0" /></svg><svg width="8" height="10"><path d="M0 0v10L7.500 5z" fill="#a0a0a0" /></svg>
          </div>
        </div>
        <ExecutionResults />
      </div>
    </div>
  );
}

/* ---------- taskbar ---------- */
const apps: { n: string; run?: boolean; active?: boolean; icon: React.ReactNode }[] = [
  { n: "chrome", run: true, icon: <svg width="30" height="30" viewBox="0 0 30 30"><circle cx="15" cy="15" r="15" fill="#fbc116" /><path d="M15 15L2 7.500A15 15 0 0 1 28 7.500z" fill="#e33b2e" /><path d="M2 7.500A15 15 0 0 0 15 30l6.500-11.500L15 15z" fill="#219a4a" /><path d="M15 7.500h13A15 15 0 0 1 15 30l6.500-11.500z" fill="#fbc116" /><circle cx="15" cy="15" r="7.500" fill="#fff" /><circle cx="15" cy="15" r="5.900" fill="#2f74e8" /></svg> },
  { n: "files", run: true, icon: <svg width="30" height="28" viewBox="0 0 30 28"><path d="M0 5V1.500L1 .5h9L13.500 4H28l2 1.500V10H0z" fill="#e0a100" /><path d="M0 5.500h11.500L14 4h16v22.500H0z" fill="#fdc82f" /><path d="M5.500 27v-5l2-2h15l2 2v5z" fill="#0b79c9" /><path d="M9 23.500h12" stroke="#07538f" /></svg> },
  { n: "lime", icon: <svg width="28" height="28" viewBox="0 0 28 28"><circle cx="14" cy="14" r="12.500" fill="#76a834" /><circle cx="14" cy="14" r="11" fill="#e8f3b8" /><circle cx="14" cy="14" r="9.800" fill="#a9cf55" /><path d="M14 4v20M4 14h20M7 7l14 14M21 7L7 21" stroke="#e8f3b8" strokeWidth="1.200" /><path d="M1 9l23 16" stroke="#4a2a16" strokeWidth="2" /><path d="M6 13l14 9.500" stroke="#d2622a" strokeWidth="1.300" /></svg> },
  { n: "grid", icon: <div className="grid size-[30px] grid-cols-3 gap-[2px] bg-white p-[2px]"><i className="bg-[#1d78ff]" /><i className="bg-[#1560c8]" /><i className="bg-[#10478f]" /><i className="bg-[#00e000]" /><i className="bg-[#00aa00]" /><i className="bg-[#008000]" /><i className="bg-[#ff2a00]" /><i className="bg-[#c01800]" /><i className="bg-[#861000]" /></div> },
  { n: "camtasia", icon: <svg width="30" height="30" viewBox="0 0 30 30"><path d="M23.500 6.500a11.500 11.500 0 1 0 0 17" fill="none" stroke="#9aaab6" strokeWidth="7" /><path d="M23.500 6.500A11.500 11.500 0 0 0 4 11" fill="none" stroke="#d4dde6" strokeWidth="7" /><path d="M28 11.500v7L22.500 15z" fill="#4d3480" stroke="#1fd6b0" strokeWidth="2" /></svg> },
  { n: "orange", icon: <svg width="30" height="30" viewBox="0 0 30 30"><path d="M2 25C-3 14 13 0 27 2c6 9-2 21-13 25-5 1-9 1-12-2z" fill="#fff" /><path d="M27 4c4 8-3 18-13 21-4 1-7 1-9 0z" fill="#f58a00" /><ellipse cx="14" cy="13.500" rx="13" ry="8.500" fill="#ffb600" stroke="#fff1c0" transform="rotate(-38 14 13.500)" /><path d="M5 20L23 7M14 13.500L13 5M14 13.500l4 6M14 13.500L7 12M14 13.500h8M14 13.500L10 22" stroke="#fff3b0" strokeWidth="1.200" /></svg> },
  { n: "c", icon: <div className="flex size-[28px] items-center justify-center rounded-[7px] border-2 border-[#223b52] bg-[#0fa3dc] font-['Liberation_Sans',sans-serif] text-[23px] font-bold leading-none text-[#eefaff]">C</div> },
  { n: "code", run: true, icon: <svg width="30" height="30" viewBox="0 0 30 30"><path d="M22 7L4 21.500.5 19V17.500L21.500 0z" fill="#0a78c8" /><path d="M22 23L4 8.500.5 11v1.500L21.500 30z" fill="#1287d8" /><path d="M21.500 0L30 4v22l-8.500 4z" fill="#2aa5f4" /></svg> },
  { n: "hs", run: true, icon: <svg width="28" height="28" viewBox="0 0 28 28"><circle cx="14" cy="14" r="13.700" fill="#e8e8e8" /><path d="M.3 14a13.700 13.700 0 0 1 27.400 0z" fill="#4f9d10" /><text x="14" y="18.800" textAnchor="middle" fontSize="13" fontWeight="700" fill="#111" stroke="#fff" strokeWidth="1.500" paintOrder="stroke" fontFamily="Open Sans">HS</text></svg> },
  { n: "spoon", active: true, icon: <SpoonLogo s={30} /> },
  { n: "paint", run: true, icon: <svg width="29" height="30" viewBox="0 0 29 30"><path d="M16 .5c8 0 12 6 12 12 0 8-5 12-8 12-3 0-4-2-5-2-2 0 0 5-5 5C4 27.500.5 24 .5 18 .5 8 8 .5 16 .5z" fill="#43b4ee" /><circle cx="5" cy="15.500" r="2.600" fill="#c8552a" /><circle cx="8" cy="9.500" r="2.600" fill="#3a9a3a" /><circle cx="15" cy="6" r="2.600" fill="#f2b21a" /><circle cx="14.500" cy="16.500" r="2" fill="#53308e" /><path d="M20 9.500h5v6h-5z" fill="#f1d9a8" /><path d="M21 15.500h3L23.500 30h-2z" fill="#b5651d" /></svg> },
];
const Taskbar = () => (
  <div className="flex h-[60px] w-[1920px] items-center border-t border-[#5c5280] bg-[linear-gradient(90deg,#251f52_0%,#2f2a62_20%,#37306f_27%,#382c80_38%,#533b8b_46%,#573f8c_51%,#522a8f_62%,#4d2a86_74%,#45297a_82%,#3c276b_100%)] font-['Open_Sans',sans-serif] text-white">
    <svg width="29" height="29" viewBox="0 0 29 29" className="ml-[503px] shrink-0"><defs><linearGradient id="win" x1="0" y1="0" x2="1" y2="1"><stop offset="0" stopColor="#7fdcff" /><stop offset="1" stopColor="#0a93f7" /></linearGradient></defs><path d="M0 1.500Q0 0 1.500 0H14v14H0zM15 0h12.500Q29 0 29 1.500V14H15zM0 15h14v14H1.500Q0 29 0 27.500zM15 15h14v12.500q0 1.500-1.500 1.500H15z" fill="url(#win)" /></svg>
    <div className="ml-[16px] flex h-[40px] w-[275px] items-center rounded-full border border-white/15 bg-white/15 pl-[14px]">
      <svg width="19" height="19" viewBox="0 0 19 19" fill="none" stroke="#eee" strokeWidth="2"><circle cx="8" cy="8" r="6.800" /><path d="M13 13l5 5" /></svg>
      <Fit w={50} className="ml-[13px] text-[16px] text-[#dedbe8]">Buscar</Fit>
      <svg width="25" height="25" viewBox="0 0 25 25" className="ml-[145px]"><path d="M12.500 .5a12 12 0 1 1 0 24H.5V12.500A12 12 0 0 1 12.500.500z" fill="#1e88e0" /><circle cx="13" cy="12" r="10.500" fill="#fff" /><path d="M8.500 4l3.500 1.500v10l2.500-1.500-1.500-3.500 5.500 2v3L12 19.500l-3.500-2z" fill="#1779d8" /></svg>
    </div>
    <div className="ml-[3px] flex">
      {apps.map((a) => (
        <div key={a.n} className="flex h-[60px] w-[55px] items-center justify-center">
          <div className={"relative flex h-[50px] w-[50px] items-center justify-center rounded-[5px] " + (a.active ? "border border-white/5 bg-white/5" : "")}>
            {a.icon}
            {a.run && <i className="absolute bottom-[1px] h-[4px] w-[8px] rounded-full bg-[#b3a3cc]" />}
            {a.active && <i className="absolute bottom-0 h-[4px] w-[20px] rounded-full bg-[#cdb2e8]" />}
          </div>
        </div>
      ))}
    </div>
    <svg width="14" height="9" className="ml-[168px] shrink-0"><path d="M1 7.500l6-6 6 6" fill="none" stroke="#fff" strokeWidth="1.700" /></svg>
    <div className="ml-[27px] flex w-[28px] flex-col items-center text-[14px] leading-[20px]"><Fit w={24}>ESP</Fit><Fit w={27}>LAA</Fit></div>
    <svg width="20" height="16" viewBox="0 0 20 16" className="ml-[23px] shrink-0" fill="none" stroke="#fff" strokeWidth="1.500"><path d="M.8 6a13 13 0 0 1 18.400 0M3.600 9a9 9 0 0 1 12.800 0M6.300 11.800a5.200 5.200 0 0 1 7.400 0" /><circle cx="10" cy="14" r="1.300" fill="#fff" /></svg>
    <svg width="20" height="16" viewBox="0 0 20 16" className="ml-[10px] shrink-0" fill="none" stroke="#fff" strokeWidth="1.400"><path d="M.8 5.500h3L8 1.500v13l-4.200-4h-3z" /><path d="M10.500 5.500q2 2.500 0 5M13 3q3.500 5 0 10" /><path d="M16 1q4.500 7 0 14" opacity=".4" /></svg>
    <svg width="21" height="17" viewBox="0 0 21 17" className="ml-[9px] shrink-0"><rect x="2" y="4" width="16" height="11" rx="2.500" fill="none" stroke="#fff" strokeWidth="1.500" /><path d="M4 13.500V10l4-3.500h8v7z" fill="#fff" /><path d="M19 7.500v4h1.500v-4z" fill="#fff" stroke="#fff" /><path d="M4.500 0L1 6h2.500L2.500 10 7 4.500H4.500z" fill="#fff" stroke="#41296f" strokeWidth=".7" /></svg>
    <div className="ml-[20px] flex w-[70px] flex-col items-end text-[14px] leading-[20px]"><Fit w={37}>07:36</Fit><Fit w={69}>15/9/2023</Fit></div>
    <div className="ml-[14px] flex size-[20px] items-center justify-center rounded-full bg-[#c9aee6] text-[12px] text-black">1</div>
  </div>
);

export default function App() {
  return (
    <div className="flex h-[1080px] w-[1920px] flex-col overflow-hidden bg-[#1a1a1a] font-['Open_Sans','Noto_Sans',sans-serif] text-[14px] leading-[20px] text-black">
      <div className="flex h-[1020px]">
        <div className="h-[1012px] w-[8px] overflow-hidden bg-[#1f1f1f] pl-[2px] pt-[7px]"><svg width="12" height="14"><path d="M0 10q1-9 6-10h6v14H6q-3-2-3 0-3 2-3-4z" fill="#3bb9da" /><circle cx="4" cy="7" r="1.700" fill="#d44" /></svg></div>
        <div className="h-[1012px] w-[1904px] overflow-hidden rounded-[9px] border-x border-b border-[#5e45a3] bg-[#f0f0f0]">
          <div className="flex h-[38px] items-center bg-[#5e45a3] pl-[9px] text-white">
            <SpoonLogo s={20} /><Fit w={121} className="ml-[6px] mt-[2px] text-[14.500px]">Spoon - example4</Fit>
            <svg width="12" height="2" className="ml-[1593px]"><path d="M0 1h12" stroke="#fff" /></svg>
            <svg width="12" height="12" className="ml-[46px]"><rect x=".5" y=".5" width="11" height="11" rx="1" fill="none" stroke="#fff" /></svg>
            <svg width="12" height="12" className="ml-[47px]"><path d="M.5.500l11 11M11.500.500l-11 11" stroke="#fff" strokeWidth="1.200" /></svg>
          </div>
          <div className="flex h-[23px] items-center bg-white pl-[9px] pt-[3px]"><Fit w={23}>File</Fit><Fit w={26} className="ml-[18px]">Edit</Fit><Fit w={32} className="ml-[18px]">View</Fit><Fit w={43} className="ml-[18px]">Action</Fit><Fit w={35} className="ml-[18px]">Tools</Fit><Fit w={32} className="ml-[18px]">Help</Fit></div>
          <div className="flex h-[32px] items-start">
            <div className="h-[32px] w-[64px] pt-[2px]"><div className="h-px bg-[#a0a0a0]" />
              <div className="mt-[5px] flex w-[140px] items-center pl-[4px]"><NewFile /><div className="ml-[16px]"><OpenFile /></div><div className="ml-[7px]"><Explorer /></div><div className="ml-[7px]"><Save /></div><div className="ml-[7px]"><Save star /></div></div></div>
            <div className="ml-[1591px] mt-[8px] flex"><Fit w={78}>Perspective:</Fit></div>
            <div className="ml-[2px] mt-[4px] flex h-[25px] w-[140px] items-center rounded-[2px] border border-[#99d1ff] bg-[#cce8ff] pl-[5px]"><PerspIcon /><Fit w={109} className="ml-[6px] mt-[4px]">Data Integration</Fit></div>
          </div>
          <div className="flex gap-[3px] pl-[2px]"><LeftPanel /><RightPanel /></div>
        </div>
        <div className="flex w-[8px] flex-col bg-[#1f1f1f]"><div className="mt-[246px] h-[9px] w-[6px] bg-[#8a8a8a] [clip-path:polygon(0_0,100%_100%,0_100%)]" /><div className="mt-[40px] h-[578px] w-[5px] rounded-b bg-[#858585]" /><div className="mt-[86px] h-[9px] w-[6px] bg-[#8a8a8a] [clip-path:polygon(0_0,100%_0,0_100%)]" /></div>
      </div>
      <Taskbar />
    </div>
  );
}
